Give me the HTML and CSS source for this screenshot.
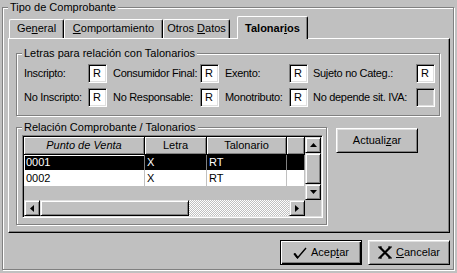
FILE: index.html
```html
<!DOCTYPE html>
<html lang="es">
<head>
<meta charset="utf-8">
<title>Tipo de Comprobante</title>
<link rel="stylesheet" href="styles.css">
</head>
<body>
<div class="outer">
  <span class="legend">Tipo de Comprobante</span>
  <div class="tabs">
    <div class="tab tab-general">Ge<u>n</u>eral</div>
    <div class="tab tab-comp"><u>C</u>omportamiento</div>
    <div class="tab tab-otros">Otros <u>D</u>atos</div>
    <div class="tab tab-tal active">Talonar<u>i</u>os</div>
  </div>
  <div class="panel">
    <div class="group letras">
      <span class="legend">Letras para relación con Talonarios</span>
      <div class="letras-grid">
        <span class="lbl">Inscripto:</span><span class="edit">R</span>
        <span class="lbl">Consumidor Final:</span><span class="edit">R</span>
        <span class="lbl">Exento:</span><span class="edit">R</span>
        <span class="lbl">Sujeto no Categ.:</span><span class="edit">R</span>
        <span class="lbl">No Inscripto:</span><span class="edit">R</span>
        <span class="lbl">No Responsable:</span><span class="edit">R</span>
        <span class="lbl">Monotributo:</span><span class="edit">R</span>
        <span class="lbl">No depende sit. IVA:</span><span class="edit disabled"></span>
      </div>
    </div>
    <div class="lower">
      <div class="group relacion">
        <span class="legend">Relación Comprobante / Talonarios</span>
        <div class="dbgrid">
          <div class="grid-top">
            <div class="grid-data">
              <div class="grow head">
                <div class="cell c1">Punto de Venta</div>
                <div class="cell c2">Letra</div>
                <div class="cell c3">Talonario</div>
                <div class="cell c4"></div>
              </div>
              <div class="grow sel">
                <div class="cell c1 focus">0001</div>
                <div class="cell c2">X</div>
                <div class="cell c3">RT</div>
                <div class="cell c4"></div>
              </div>
              <div class="grow">
                <div class="cell c1">0002</div>
                <div class="cell c2">X</div>
                <div class="cell c3">RT</div>
                <div class="cell c4"></div>
              </div>
            </div>
            <div class="vscroll">
              <div class="sbtn"><svg width="7" height="4" viewBox="0 0 7 4"><path d="M3.5 0 L7 4 L0 4 Z" fill="#000"/></svg></div>
              <div class="sbtn vthumb"></div>
              <div class="sbtn"><svg width="7" height="4" viewBox="0 0 7 4"><path d="M0 0 L7 0 L3.5 4 Z" fill="#000"/></svg></div>
            </div>
          </div>
          <div class="hscroll">
            <div class="sbtn"><svg width="4" height="7" viewBox="0 0 4 7"><path d="M0 3.5 L4 0 L4 7 Z" fill="#000"/></svg></div>
            <div class="sbtn hthumb"></div>
            <div class="track"></div>
            <div class="sbtn"><svg width="4" height="7" viewBox="0 0 4 7"><path d="M0 0 L4 3.5 L0 7 Z" fill="#000"/></svg></div>
            <div class="corner"></div>
          </div>
        </div>
      </div>
      <button class="btn actualizar"><span>Actuali<u>z</u>ar</span></button>
    </div>
  </div>
  <div class="footer">
    <button class="btn default"><svg class="ico" width="14" height="12" viewBox="0 0 14 12"><path d="M1 6.5 L4.5 11 L13 1" fill="none" stroke="#000" stroke-width="1.4"/><path d="M1.5 6.5 L4.5 10.5" stroke="#000" stroke-width="2"/></svg><span>Acep<u>t</u>ar</span></button>
    <button class="btn"><svg class="ico" width="14" height="13" viewBox="0 0 14 13"><path d="M1.5 1 L12.5 12 M12.5 1 L1.5 12" stroke="#000" stroke-width="2.2"/><path d="M0 1 H4 M10 1 H14 M0 12 H4 M10 12 H14" stroke="#000" stroke-width="1"/></svg><span><u>C</u>ancelar</span></button>
  </div>
</div>
</body>
</html>
```

FILE: styles.css
```css
* { box-sizing: border-box; }
html, body {
  margin: 0;
  padding: 0;
}
body {
  width: 457px;
  height: 273px;
  overflow: hidden;
  background: #c0c0c0;
  font-family: "Liberation Sans", Arial, sans-serif;
  font-size: 11px;
  line-height: 13px;
  color: #000;
}
u { text-decoration: underline; text-underline-offset: 1px; }

.outer {
  margin: 7px 0 0 2px;
  width: 452px;
  height: 263px;
  border: 1px solid #808080;
  box-shadow: inset 1px 1px 0 #fff, 1px 1px 0 #fff;
}
.legend {
  display: block;
  width: max-content;
  height: 13px;
  margin: -7px 0 0 5px;
  padding: 0 2px;
  background: #c0c0c0;
  white-space: nowrap;
}

/* tabs */
.tabs {
  display: flex;
  align-items: flex-end;
  height: 22px;
  margin: 2px 0 0 6px;
}
.tab {
  height: 19px;
  padding-top: 2px;
  text-align: center;
  border-top: 1px solid #fff;
  border-left: 1px solid #fff;
  border-right: 1px solid #000;
  border-radius: 2px 2px 0 0;
  box-shadow: inset -1px 0 0 #808080;
  white-space: nowrap;
}
.tab-general { width: 55px; }
.tab-comp { width: 99px; }
.tab-otros { width: 67px; }
.tab-tal { width: 71px; margin-left: 7px; }
.tab.active {
  position: relative;
  z-index: 1;
  height: 23px;
  margin-bottom: -1px;
  padding-top: 5px;
  font-weight: bold;
  background: #c0c0c0;
}

/* panel */
.panel {
  margin-left: 5px;
  width: 442px;
  height: 195px;
  border-top: 1px solid #fff;
  border-left: 1px solid #fff;
  border-right: 1px solid #000;
  border-bottom: 1px solid #000;
  box-shadow: inset -1px -1px 0 #808080;
}

.group {
  border: 1px solid #808080;
  box-shadow: inset 1px 1px 0 #fff, 1px 1px 0 #fff;
}
.letras {
  margin: 14px 0 0 7px;
  width: 424px;
  height: 63px;
}
.letras-grid {
  display: grid;
  grid-template-columns: 64px 25px 87px 25px 64px 24px 103px 19px;
  grid-template-rows: 19px 19px;
  row-gap: 5px;
  align-items: center;
  margin: 4px 0 0 7px;
}
.lbl { white-space: nowrap; letter-spacing: -0.3px; }
.edit {
  width: 19px;
  height: 19px;
  padding: 2px 0 0 4px;
  background: #fff;
  border: 1px solid;
  border-color: #808080 #fff #fff #808080;
  box-shadow: inset 1px 1px 0 #000, inset -1px -1px 0 #dfdfdf;
}
.edit.disabled { background: #c0c0c0; }

.lower {
  display: flex;
  align-items: flex-start;
  margin: 11px 0 0 7px;
}
.relacion {
  width: 311px;
  height: 98px;
}
.dbgrid {
  margin: 1px 0 0 5px;
  width: 301px;
  height: 83px;
  border: 1px solid;
  border-color: #808080 #fff #fff #808080;
  box-shadow: inset 1px 1px 0 #000, inset -1px -1px 0 #dfdfdf;
  padding: 1px;
  display: flex;
  flex-direction: column;
}
.grid-top {
  display: flex;
  height: 63px;
}
.grid-data {
  width: 281px;
  background: #c0c0c0;
}
.grow {
  display: flex;
  height: 16px;
  background: #fff;
}
.grow.head {
  height: 18px;
  background: #c0c0c0;
}
.cell {
  height: 100%;
  padding: 1px 0 0 2px;
  border-right: 1px solid #c0c0c0;
  border-bottom: 1px solid #c0c0c0;
  white-space: nowrap;
  overflow: hidden;
}
.c1 { width: 121px; }
.c2 { width: 62px; }
.c3 { width: 80px; }
.c4 { width: 18px; }
.head .cell {
  padding: 2px 0 0 0;
  text-align: center;
  border-right: 1px solid #000;
  border-bottom: 1px solid #000;
  box-shadow: inset 1px 1px 0 #fff, inset -1px -1px 0 #808080;
}
.head .c1 { font-style: italic; }
.sel { background: #000; color: #fff; }
.sel .cell { border-bottom-color: #fff; border-right-color: #808080; }
.sel .focus { box-shadow: inset 0 1px 0 #fff, inset 1px 0 0 #fff; }

.sbtn {
  width: 16px;
  height: 16px;
  display: flex;
  align-items: center;
  justify-content: center;
  background: #c0c0c0;
  border: 1px solid;
  border-color: #dfdfdf #000 #000 #dfdfdf;
  box-shadow: inset 1px 1px 0 #fff, inset -1px -1px 0 #808080;
}
.vscroll {
  width: 16px;
  display: flex;
  flex-direction: column;
}
.vthumb { height: 31px; }
.hscroll {
  display: flex;
  height: 16px;
}
.hthumb { width: 149px; }
.track {
  width: 100px;
  height: 16px;
  background: repeating-conic-gradient(#fff 0 25%, #c0c0c0 0 50%) 0 0 / 2px 2px;
}
.corner {
  width: 16px;
  height: 16px;
  background: #c0c0c0;
}

.btn {
  display: flex;
  align-items: center;
  justify-content: center;
  gap: 4px;
  width: 82px;
  height: 25px;
  padding: 0;
  font: inherit;
  color: #000;
  background: #c0c0c0;
  border: 1px solid;
  border-color: #fff #000 #000 #fff;
  box-shadow: inset 1px 1px 0 #dfdfdf, inset -1px -1px 0 #808080;
}
.actualizar { margin: 1px 0 0 9px; }
.btn.default {
  border-color: #000;
  box-shadow: inset 1px 1px 0 #fff, inset -1px -1px 0 #000, inset -2px -2px 0 #808080;
}
.footer {
  display: flex;
  justify-content: flex-end;
  gap: 6px;
  margin-top: 7px;
  padding-right: 3px;
}
.ico { flex: none; }
```
